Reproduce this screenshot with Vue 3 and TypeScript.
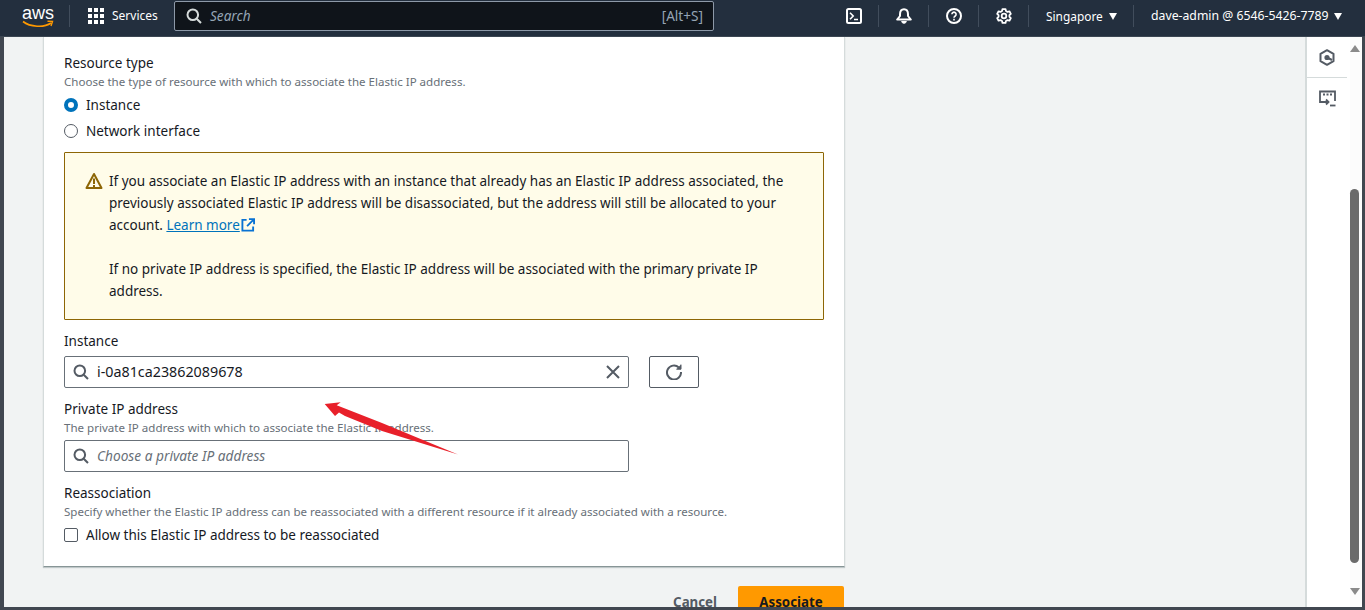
<script setup lang="ts">
const navIcons = ['console', 'bell', 'help', 'gear']
</script>

<template>
  <div class="frame">
    <header class="nav">
      <div class="logo">
        <span class="aws">aws</span>
        <svg class="smile" width="32" height="9" viewBox="0 0 32 9">
          <path d="M1 1.5C8 7 22 8 29 3" fill="none" stroke="#f90" stroke-width="1.6" />
          <path d="M25.5 1.2L30.5 1.4L29 6" fill="none" stroke="#f90" stroke-width="1.4" />
        </svg>
      </div>
      <div class="services">
        <div class="grid"><i v-for="n in 9" :key="n"></i></div>
        <span>Services</span>
      </div>
      <div class="search">
        <svg width="16" height="16" viewBox="0 0 16 16" fill="none" stroke="#d5dbdb" stroke-width="2">
          <circle cx="6.8" cy="6.8" r="5.3" />
          <path d="M10.7 10.7L15 15" />
        </svg>
        <span class="search-text">Search</span>
        <span class="shortcut">[Alt+S]</span>
      </div>
      <div class="nav-right">
        <div v-for="icon in navIcons" :key="icon" class="nav-icon">
          <svg v-if="icon === 'console'" width="16" height="16" viewBox="0 0 16 16" fill="none" stroke="#fff" stroke-width="2">
            <rect x="1" y="1" width="14" height="14" rx="1.5" />
            <path d="M4 4.8L7.2 8L4 11.2M8 11.5H12" stroke-width="1.6" />
          </svg>
          <svg v-else-if="icon === 'bell'" width="16" height="16" viewBox="0 0 16 16" fill="none" stroke="#fff" stroke-width="2">
            <path d="M8 1.2C5.2 1.2 4 3.6 4 6.2V8L1.2 11.5H14.8L12 8V6.2C12 3.6 10.8 1.2 8 1.2Z" stroke-linejoin="round" />
            <path d="M5.7 13a2.3 2.3 0 0 0 4.6 0" fill="#fff" stroke-width="1" />
          </svg>
          <svg v-else-if="icon === 'help'" width="16" height="16" viewBox="0 0 16 16" fill="none" stroke="#fff" stroke-width="2">
            <circle cx="8" cy="8" r="7" />
            <path d="M5.9 6.2a2.1 2.1 0 1 1 3.3 1.8C8.5 8.5 8 8.9 8 9.7" stroke-width="1.6" />
            <path d="M8 10.8V12.6" stroke-width="1.6" />
          </svg>
          <svg v-else width="16" height="16" viewBox="0 0 18 18" fill="none" stroke="#fff" stroke-width="2">
            <path d="M7.3 1.2h3.4l.5 2.2 1.7 1 2.2-.7 1.6 2.9-1.6 1.5v1.8l1.6 1.5-1.6 2.9-2.2-.7-1.7 1-.5 2.2H7.3l-.5-2.2-1.7-1-2.2.7-1.6-2.9 1.6-1.5V8.1L1.3 6.6l1.6-2.9 2.2.7 1.7-1z" stroke-linejoin="round" />
            <circle cx="9" cy="9" r="2.6" />
          </svg>
        </div>
        <div class="nav-text region">Singapore<i class="caret"></i></div>
        <div class="nav-text account">dave-admin @ 6546-5426-7789<i class="caret"></i></div>
      </div>
    </header>

    <div class="body">
      <main class="content">
        <section class="card">
          <div class="field">
            <div class="label">Resource type</div>
            <div class="hint">Choose the type of resource with which to associate the Elastic IP address.</div>
            <div class="option first"><span class="radio on"></span>Instance</div>
            <div class="option"><span class="radio"></span>Network interface</div>
          </div>

          <div class="alert">
            <svg class="warn" width="18" height="18" viewBox="0 0 18 18" fill="none" stroke="#8d6605" stroke-width="2">
              <path d="M9 2L16.5 16H1.5Z" stroke-linejoin="round" />
              <path d="M9 6.5V12M9 13V15" />
            </svg>
            <div class="alert-text">
              <p>
                If you associate an Elastic IP address with an instance that already has an Elastic IP address associated, the<br />
                previously associated Elastic IP address will be disassociated, but the address will still be allocated to your<br />
                account. <a class="link">Learn more</a><svg class="ext" width="14" height="14" viewBox="0 0 15 15" fill="none" stroke="#0972d3" stroke-width="2"><path d="M6 2H1.5V13.5H13V9" /><path d="M8.5 1.2H14V6.7M13.5 1.7L6.5 8.7" /></svg>
              </p>
              <p>
                If no private IP address is specified, the Elastic IP address will be associated with the primary private IP<br />
                address.
              </p>
            </div>
          </div>

          <div class="field instance">
            <div class="label">Instance</div>
            <div class="row">
              <div class="input">
                <svg class="mag" width="16" height="16" viewBox="0 0 16 16" fill="none" stroke="#545b64" stroke-width="2">
                  <circle cx="6.8" cy="6.8" r="5.3" />
                  <path d="M10.7 10.7L15 15" />
                </svg>
                <span class="value">i-0a81ca23862089678</span>
                <svg class="clear" width="14" height="14" viewBox="0 0 14 14" fill="none" stroke="#545b64" stroke-width="2">
                  <path d="M1 1L13 13M13 1L1 13" />
                </svg>
              </div>
              <button class="refresh" type="button">
                <svg width="16" height="16" viewBox="0 0 16 16" fill="none" stroke="#545b64" stroke-width="2">
                  <path d="M12.8 3.4A7 7 0 1 0 15 8" />
                  <path d="M15 .6V5.2H10.4" fill="#545b64" stroke-width="1" />
                </svg>
              </button>
            </div>
          </div>

          <div class="field private">
            <div class="label">Private IP address</div>
            <div class="hint">The private IP address with which to associate the Elastic IP address.</div>
            <div class="input wide">
              <svg class="mag" width="16" height="16" viewBox="0 0 16 16" fill="none" stroke="#545b64" stroke-width="2">
                <circle cx="6.8" cy="6.8" r="5.3" />
                <path d="M10.7 10.7L15 15" />
              </svg>
              <span class="placeholder">Choose a private IP address</span>
            </div>
          </div>

          <div class="field reassoc">
            <div class="label">Reassociation</div>
            <div class="hint">Specify whether the Elastic IP address can be reassociated with a different resource if it already associated with a resource.</div>
            <div class="option first"><span class="check"></span>Allow this Elastic IP address to be reassociated</div>
          </div>
        </section>

        <div class="actions">
          <span class="cancel">Cancel</span>
          <button class="primary" type="button">Associate</button>
        </div>
      </main>

      <aside class="side">
        <div class="side-item">
          <svg width="16" height="17" viewBox="0 0 16 17" fill="none" stroke="#545b64" stroke-width="2">
            <path d="M8 1.2L14.5 4.8V12.2L8 15.8L1.5 12.2V4.8Z" stroke-linejoin="round" />
            <circle cx="8" cy="8.5" r="1.6" fill="#545b64" />
            <path d="M8 8.5L13 11" />
          </svg>
        </div>
        <div class="side-item second">
          <svg width="17" height="17" viewBox="0 0 17 17" fill="none" stroke="#545b64" stroke-width="1.8">
            <path d="M5 12H1V1.5H16V11" />
            <path d="M4 4.5H6M7.5 4.5H9.5M11 4.5H13" />
            <path d="M5 12H9M7 9.5L9.5 12L7 14.5" />
            <path d="M11 15.5H16.5" />
          </svg>
        </div>
      </aside>

      <div class="scrollbar">
        <i class="arrow up"></i>
        <div class="thumb"></div>
        <i class="arrow down"></i>
      </div>
    </div>

    <svg class="annotation" width="140" height="60" viewBox="324 400 140 60">
      <polygon points="324.7,404 340.7,402.3 336.7,405.2 382,423 458,454.5 382,431 345,416 339,412.5 335,416" fill="#e8202a" />
    </svg>
  </div>
</template>

<style>
html,
body {
  margin: 0;
  overflow: hidden;
}
</style>

<style scoped>
* {
  box-sizing: border-box;
}
.frame {
  position: relative;
  width: 1365px;
  height: 610px;
  display: flex;
  flex-direction: column;
  overflow: hidden;
  background: #414750;
  padding: 0 3px 3px 4px;
  font-family: "Noto Sans", "Open Sans", sans-serif;
  font-size: 13.5px;
  line-height: 22px;
  color: #16191f;
}
.nav {
  flex: none;
  height: 37px;
  margin: 0 -3px 0 -4px;
  padding: 0 0 4px 4px;
  display: flex;
  align-items: center;
  background: #232f3e;
  border-bottom: 1px solid #3b4652;
  color: #fff;
}
.logo {
  width: 65px;
  height: 26px;
  padding-left: 18px;
  position: relative;
}
.aws {
  display: block;
  font-size: 18px;
  line-height: 20px;
  font-family: "Liberation Sans", sans-serif;
}
.smile {
  position: absolute;
  left: 18px;
  top: 17px;
}
.services {
  height: 22px;
  width: 105px;
  padding-left: 18px;
  display: flex;
  align-items: center;
  gap: 8px;
  font-size: 12px;
  border-left: 1px solid #414d5c;
}
.grid {
  width: 16px;
  height: 16px;
  display: grid;
  grid-template-columns: repeat(3, 4px);
  grid-auto-rows: 4px;
  gap: 2px;
}
.grid i {
  background: #fff;
}
.search {
  width: 540px;
  height: 30px;
  display: flex;
  align-items: center;
  padding: 0 10px 0 11px;
  background: #0f141a;
  border: 1px solid #8d99a8;
  border-radius: 2px;
}
.search-text {
  margin-left: 8px;
  font-style: italic;
  font-size: 13.6px;
  color: #95a5b5;
}
.shortcut {
  margin-left: auto;
  font-size: 13.6px;
  color: #95a5b5;
}
.nav-right {
  display: flex;
  align-items: center;
  margin-left: 115px;
}
.nav-icon {
  width: 50px;
  height: 22px;
  display: flex;
  align-items: center;
  justify-content: center;
  border-right: 1px solid #414d5c;
}
.nav-text {
  font-size: 11.9px;
  display: flex;
  align-items: center;
  white-space: nowrap;
}
.region {
  width: 105px;
  height: 22px;
  padding-left: 17px;
  border-right: 1px solid #414d5c;
}
.account {
  padding-left: 17px;
  font-size: 12.25px;
}
.caret {
  width: 0;
  height: 0;
  margin-left: 6px;
  border-left: 4.5px solid transparent;
  border-right: 4.5px solid transparent;
  border-top: 7px solid #fff;
}
.body {
  flex: 1;
  min-height: 0;
  display: flex;
  background: #f1f3f3;
}
.content {
  flex: none;
  width: 1303px;
  padding-left: 39px;
  overflow: hidden;
  border-right: 2px solid #d5dbdb;
}
.card {
  width: 802px;
  height: 530px;
  padding: 15px 20px 0;
  background: #fff;
  border-left: 1px solid #d5dbdb;
  border-right: 1px solid #d5dbdb;
  border-bottom: 1px solid #879596;
  box-shadow: 0 1px 1px rgba(0, 28, 36, 0.2);
}
.label {
  height: 22px;
}
.hint {
  font-size: 11.55px;
  line-height: 16px;
  color: #687078;
}
.option {
  height: 26px;
  display: flex;
  align-items: center;
  gap: 8px;
}
.option.first {
  margin-top: 2px;
}
.radio {
  width: 14px;
  height: 14px;
  border: 1px solid #545b64;
  border-radius: 50%;
}
.radio.on {
  border: 4px solid #0073bb;
}
.check {
  width: 14px;
  height: 14px;
  border: 1px solid #545b64;
  border-radius: 2px;
}
.alert {
  width: 760px;
  height: 168px;
  margin-top: 8px;
  padding: 17px 20px;
  display: flex;
  gap: 6px;
  background: #fffce9;
  border: 1px solid #8d6605;
  border-radius: 1px;
}
.warn {
  flex: none;
  margin-top: 2px;
}
.alert-text p {
  margin: 0 0 22px;
  white-space: nowrap;
}
.link {
  color: #0073bb;
  text-decoration: underline;
}
.ext {
  margin-left: 1px;
  vertical-align: -2px;
}
.instance {
  margin-top: 10px;
}
.row {
  margin-top: 4px;
  display: flex;
  gap: 20px;
}
.input {
  width: 565px;
  height: 32px;
  display: flex;
  align-items: center;
  padding: 0 8px 0 8px;
  border: 1px solid #687078;
  border-radius: 2px;
}
.wide {
  margin-top: 4px;
}
.value {
  margin-left: 8px;
  font-size: 14.3px;
}
.placeholder {
  margin-left: 8px;
  font-style: italic;
  font-size: 13.7px;
  color: #687078;
}
.clear {
  margin-left: auto;
}
.refresh {
  width: 50px;
  height: 32px;
  padding: 0;
  display: flex;
  align-items: center;
  justify-content: center;
  background: #fff;
  border: 1px solid #545b64;
  border-radius: 2px;
}
.private {
  margin-top: 10px;
}
.reassoc {
  margin-top: 10px;
}
.actions {
  width: 801px;
  margin-top: 19px;
  display: flex;
  align-items: center;
  justify-content: flex-end;
  gap: 21px;
  font-weight: 700;
  font-size: 13.3px;
}
.cancel {
  color: #545b64;
}
.primary {
  width: 106px;
  height: 32px;
  padding: 0;
  border: 0;
  border-radius: 2px;
  background: #ff9900;
  color: #16191f;
  font: inherit;
  font-weight: 700;
}
.side {
  flex: none;
  width: 43px;
  background: #fff;
}
.side-item {
  height: 41px;
  margin-right: 3px;
  display: flex;
  align-items: center;
  justify-content: center;
  border-bottom: 1px solid #d5dbdb;
}
.side-item.second {
  border-bottom: 0;
}
.scrollbar {
  flex: none;
  width: 12px;
  background: #fcfcfc;
  display: flex;
  flex-direction: column;
  align-items: flex-start;
}
.thumb {
  width: 9px;
  height: 374px;
  margin-top: 137px;
  background: #6b6b6b;
  border-radius: 5px;
}
.arrow {
  width: 0;
  height: 0;
  border-left: 5px solid transparent;
  border-right: 5px solid transparent;
}
.arrow.up {
  margin-top: 8px;
  border-bottom: 7px solid #8a8a8a;
}
.arrow.down {
  margin-top: 25px;
  border-top: 7px solid #8a8a8a;
}
.annotation {
  position: absolute;
  left: 324px;
  top: 400px;
}
</style>
